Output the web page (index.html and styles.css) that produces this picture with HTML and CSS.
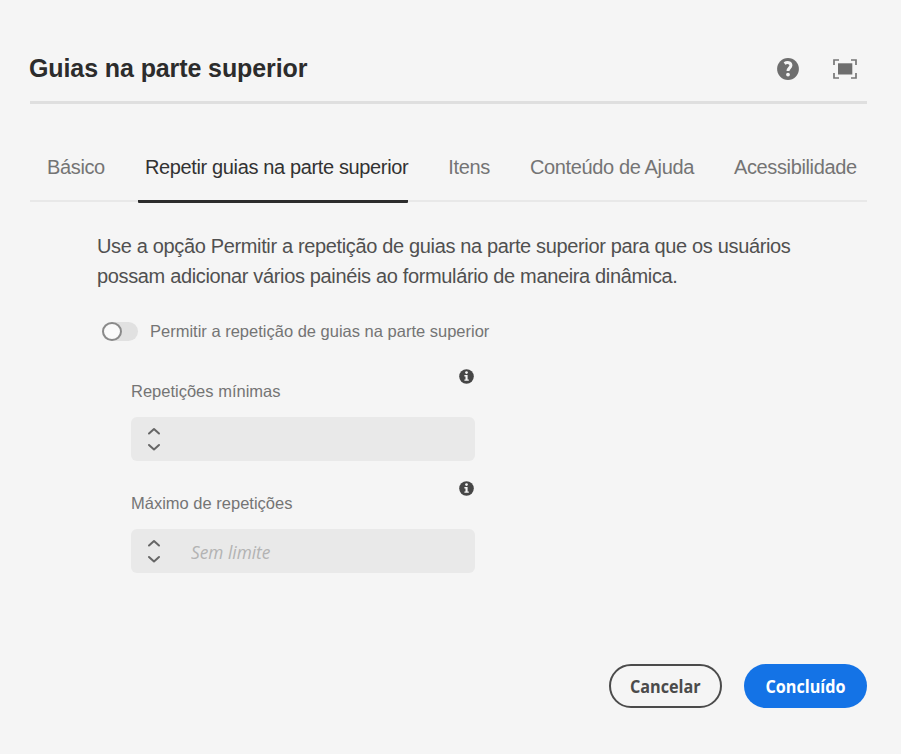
FILE: index.html
```html
<!DOCTYPE html>
<html lang="pt-BR">
<head>
<meta charset="utf-8">
<title>Guias na parte superior</title>
<link rel="stylesheet" href="styles.css">
</head>
<body>
<main class="dialog">
  <header class="header">
    <h1 class="title">Guias na parte superior</h1>
    <div class="actions">
      <svg class="help" width="22" height="22" viewBox="0 0 22 22" aria-label="Ajuda">
        <circle cx="11" cy="11" r="10.9" fill="#6e6e6e"/>
        <path d="M7.5 5.6C10.2 3.8 14 4.4 13.9 7.5C13.8 9.8 11 10 11 13" fill="none" stroke="#f5f5f5" stroke-width="3"/>
        <circle cx="11" cy="16.6" r="1.9" fill="#f5f5f5"/>
      </svg>
      <svg class="full" width="24" height="20" viewBox="0 0 24 20" aria-label="Tela cheia">
        <rect x="5" y="4.3" width="14.3" height="11.2" fill="#6e6e6e"/>
        <path d="M1 6V1H6M18 1H23V6M23 14V19H18M6 19H1V14" fill="none" stroke="#777" stroke-width="1.7"/>
      </svg>
    </div>
  </header>
  <nav class="tabs">
    <a class="tab">Básico</a>
    <a class="tab selected">Repetir guias na parte superior</a>
    <a class="tab">Itens</a>
    <a class="tab">Conteúdo de Ajuda</a>
    <a class="tab">Acessibilidade</a>
  </nav>
  <section class="panel">
    <p class="description">Use a opção Permitir a repetição de guias na parte superior para que os usuários<br>possam adicionar vários painéis ao formulário de maneira dinâmica.</p>
    <label class="toggle"><span class="track"><span class="knob"></span></span>Permitir a repetição de guias na parte superior</label>
    <div class="field">
      <div class="caption"><span>Repetições mínimas</span>
        <svg class="info" width="15" height="15" viewBox="0 0 15 15"><circle cx="7.5" cy="7.5" r="7.3" fill="#464646"/><circle cx="7.5" cy="3.6" r="1.35" fill="#f5f5f5"/><path d="M5.4 6.1H8.6V10.4H9.8V11.8H5.4V10.4H6.5V7.4H5.4Z" fill="#f5f5f5"/></svg>
      </div>
      <div class="stepper">
        <svg width="14" height="26" viewBox="0 0 14 26"><path d="M2 7.5L7 3L12 7.5M2 19L7 23.5L12 19" fill="none" stroke="#666" stroke-width="2" stroke-linecap="round" stroke-linejoin="round"/></svg>
      </div>
    </div>
    <div class="field">
      <div class="caption"><span>Máximo de repetições</span>
        <svg class="info" width="15" height="15" viewBox="0 0 15 15"><circle cx="7.5" cy="7.5" r="7.3" fill="#464646"/><circle cx="7.5" cy="3.6" r="1.35" fill="#f5f5f5"/><path d="M5.4 6.1H8.6V10.4H9.8V11.8H5.4V10.4H6.5V7.4H5.4Z" fill="#f5f5f5"/></svg>
      </div>
      <div class="stepper">
        <svg width="14" height="26" viewBox="0 0 14 26"><path d="M2 7.5L7 3L12 7.5M2 19L7 23.5L12 19" fill="none" stroke="#666" stroke-width="2" stroke-linecap="round" stroke-linejoin="round"/></svg>
        <span class="placeholder">Sem limite</span>
      </div>
    </div>
  </section>
  <footer class="footer">
    <button class="button cancel"><span>Cancelar</span></button>
    <button class="button done"><span>Concluído</span></button>
  </footer>
</main>
</body>
</html>
```
FILE: styles.css
```css
* { box-sizing: border-box; }
body {
  margin: 0;
  background: #f5f5f5;
  font-family: "Liberation Sans", Arial, sans-serif;
}
.dialog {
  width: 901px;
  height: 754px;
  padding: 35px 34px 46px 30px;
  display: flex;
  flex-direction: column;
}
.header {
  height: 69px;
  flex: none;
  display: flex;
  justify-content: space-between;
  border-bottom: 3px solid #dfdfdf;
}
.title {
  margin: 0 0 0 -1px;
  font-size: 25px;
  letter-spacing: -0.1px;
  line-height: 67px;
  color: #2c2c2c;
}
.actions {
  display: flex;
  align-items: center;
  gap: 34px;
  padding: 2px 10px 0 0;
}
.tabs {
  height: 98px;
  flex: none;
  display: flex;
  align-items: flex-end;
  padding-left: 17px;
  border-bottom: 2px solid #e8e8e8;
  font-size: 20px;
  letter-spacing: -0.36px;
  color: #747474;
}
.tab {
  height: 66px;
  line-height: 67px;
  margin-right: 40px;
  white-space: nowrap;
}
.tab:first-child { margin-right: 33px; }
.tab:last-child { margin-right: 0; }
.selected {
  height: 69px;
  margin-bottom: -3px;
  padding-left: 7px;
  border-bottom: 3px solid #2c2c2c;
  border-radius: 1px;
  color: #323232;
}
.panel { padding: 29px 0 0 67px; }
.description {
  margin: 0;
  font-size: 20px;
  letter-spacing: -0.35px;
  line-height: 30px;
  white-space: nowrap;
  color: #505050;
}
.toggle {
  height: 20px;
  margin: 31px 0 0 5px;
  display: flex;
  gap: 12px;
  font-size: 16.5px;
  line-height: 18px;
  color: #747474;
}
.track {
  width: 36px;
  height: 19px;
  border-radius: 10px;
  background: #e1e1e1;
}
.knob {
  display: block;
  width: 20px;
  height: 19px;
  border: 2px solid #8a8a8a;
  border-radius: 50%;
  background: #fafafa;
}
.field {
  width: 344px;
  margin: 27px 0 0 34px;
}
.field + .field { margin-top: 20px; }
.caption {
  height: 48px;
  display: flex;
  justify-content: space-between;
  font-size: 16.5px;
  line-height: 44px;
  color: #747474;
}
.info { margin-right: 1px; }
.stepper {
  height: 44px;
  border-radius: 6px;
  background: #e9e9e9;
  display: flex;
  align-items: center;
  gap: 30px;
  padding-left: 16px;
}
.placeholder {
  font: italic 18.5px "Open Sans", "Noto Sans", sans-serif;
  transform: scaleX(.935);
  transform-origin: left;
  color: #b3b3b3;
}
.footer {
  margin-top: auto;
  display: flex;
  justify-content: flex-end;
  gap: 22px;
}
.button {
  height: 44px;
  padding: 0;
  border-radius: 22px;
  display: flex;
  align-items: center;
  justify-content: center;
  font: 700 18px "Open Sans", "Noto Sans", sans-serif;
}
.button span { transform: scaleX(.9); }
.cancel {
  width: 113px;
  border: 2px solid #4b4b4b;
  background: transparent;
  color: #4b4b4b;
}
.done {
  width: 123px;
  border: 0;
  background: #1473e6;
  color: #fff;
}
```
